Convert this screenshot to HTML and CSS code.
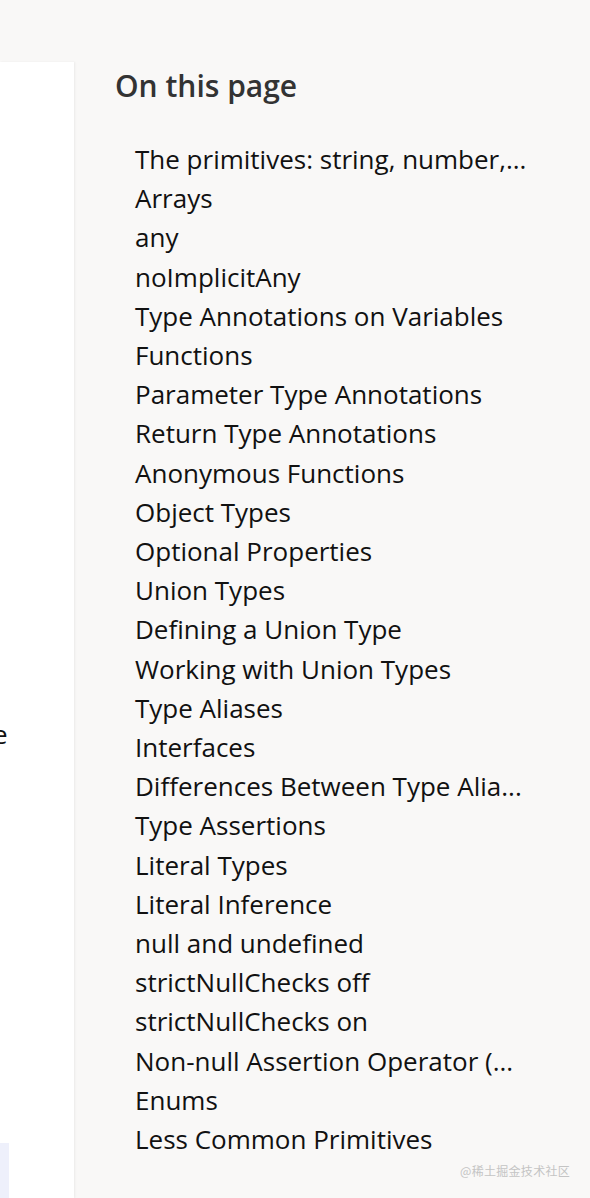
FILE: index.html
```html
<!DOCTYPE html>
<html lang="en">
<head>
<meta charset="utf-8">
<title>On this page</title>
<link rel="stylesheet" href="styles.css">
</head>
<body>
<div class="layout">
  <div class="content-panel">
    <div class="content-text">e</div>
    <div class="content-tab"></div>
  </div>
  <aside class="toc">
    <h2 class="toc-title">On this page</h2>
    <ul class="toc-list">
      <li>The primitives: string, number,...</li>
      <li>Arrays</li>
      <li>any</li>
      <li>noImplicitAny</li>
      <li>Type Annotations on Variables</li>
      <li>Functions</li>
      <li>Parameter Type Annotations</li>
      <li>Return Type Annotations</li>
      <li>Anonymous Functions</li>
      <li>Object Types</li>
      <li>Optional Properties</li>
      <li>Union Types</li>
      <li>Defining a Union Type</li>
      <li>Working with Union Types</li>
      <li>Type Aliases</li>
      <li>Interfaces</li>
      <li>Differences Between Type Alia...</li>
      <li>Type Assertions</li>
      <li>Literal Types</li>
      <li>Literal Inference</li>
      <li>null and undefined</li>
      <li>strictNullChecks off</li>
      <li>strictNullChecks on</li>
      <li>Non-null Assertion Operator (...</li>
      <li>Enums</li>
      <li>Less Common Primitives</li>
    </ul>
  </aside>
</div>
<div class="watermark">@稀土掘金技术社区</div>
</body>
</html>
```
FILE: styles.css
```css
html, body {
  margin: 0;
  padding: 0;
  background: #f9f8f7;
  height: 1198px;
  overflow: hidden;
}
body {
  font-family: "Open Sans", "Noto Sans", sans-serif;
  color: #111;
}
.layout {
  display: flex;
  height: 1198px;
}
.content-panel {
  position: relative;
  width: 74px;
  flex: 0 0 74px;
  margin-top: 62px;
  background: #fff;
  box-shadow: 1px 0 2px rgba(0,0,0,0.06);
  overflow: hidden;
}
.content-text {
  position: absolute;
  top: 656px;
  left: -7px;
  font-size: 26px;
  line-height: 32px;
  color: #111;
}
.content-tab {
  position: absolute;
  left: 0;
  top: 1081px;
  width: 9px;
  height: 60px;
  background: #eef0fb;
}
.toc {
  padding-left: 41px;
  padding-top: 66px;
}
.toc-title {
  margin: 0;
  font-size: 30px;
  line-height: 40px;
  font-weight: 600;
  color: #333;
}
.toc-list {
  list-style: none;
  margin: 34px 0 0;
  padding: 0 0 0 20px;
}
.toc-list li {
  font-size: 26px;
  line-height: 39.2px;
  white-space: nowrap;
}
.watermark {
  position: absolute;
  left: 460px;
  top: 1162px;
  font-family: "Noto Sans CJK SC", sans-serif;
  font-size: 12px;
  color: #c4c4c4;
  letter-spacing: 0.3px;
}
```
